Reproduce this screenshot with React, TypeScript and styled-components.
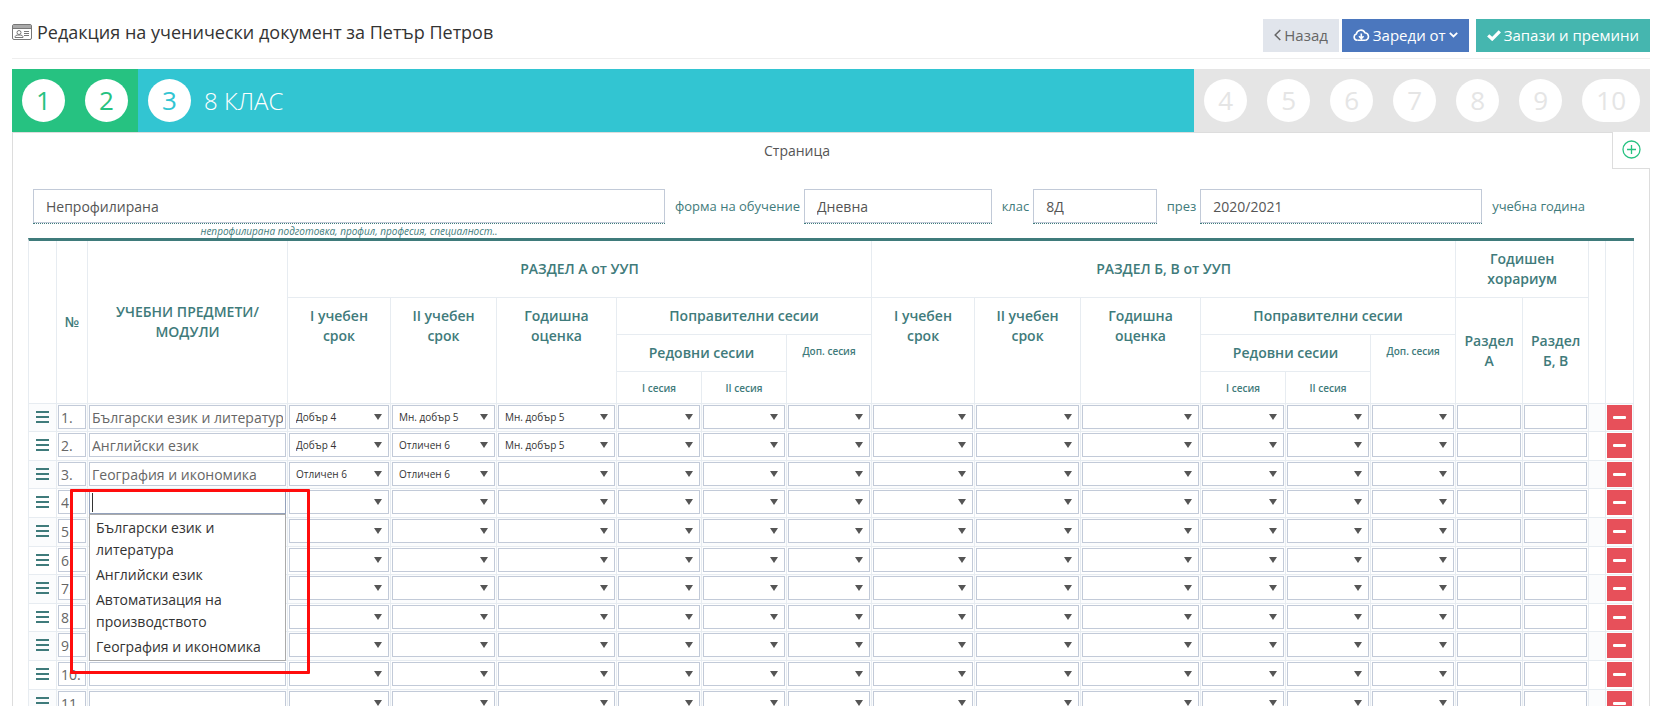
import React, { useId } from "react";
import styled, { createGlobalStyle, css } from "styled-components";

const teal = "#3f7b7b";
const line = "#e7ecf1";
const inputLine = "#c2cad8";

const GlobalStyle = createGlobalStyle`
  *, *::before, *::after { box-sizing: border-box; }
  html { scrollbar-width: none; }
  body {
    margin: 0;
    background: #fff;
    color: #333;
    font-family: "Open Sans", "Noto Sans", sans-serif;
    font-size: 14px;
  }
  button, input, select { font: inherit; color: inherit; }
`;

const Page = styled.main`
  padding: 18px 4px 0 12px;
`;

const Header = styled.header`
  display: flex;
  align-items: flex-start;
  justify-content: space-between;
  height: 41px;
  border-bottom: 1px solid #eee;
  margin-bottom: 10px;
`;

const Title = styled.h1`
  display: flex;
  align-items: center;
  gap: 5px;
  margin: 0;
  font-size: 18px;
  line-height: 28px;
  font-weight: 400;
`;

const Actions = styled.div`
  display: flex;
  padding-top: 1px;
`;

const Button = styled.button<{ $bg: string; $fg?: string; $gap?: number }>`
  display: inline-flex;
  align-items: center;
  gap: 3px;
  height: 33px;
  padding: 0 11px 1px;
  margin-left: ${(p) => p.$gap ?? 0}px;
  border: 0;
  background: ${(p) => p.$bg};
  color: ${(p) => p.$fg ?? "#fff"};
  font-size: 15px;
  line-height: 20px;
`;

const Steps = styled.ol`
  display: flex;
  margin: 0;
  padding: 0;
  list-style: none;
  height: 63px;
`;

type StepState = "done" | "active" | "todo";
const stepColor: Record<StepState, string> = { done: "#26c281", active: "#32c5d2", todo: "#e5e5e5" };

const Step = styled.li<{ $state: StepState }>`
  display: flex;
  align-items: center;
  gap: 13px;
  padding: 0 10px;
  background: ${(p) => stepColor[p.$state]};
  color: #fff;
  font-size: 24px;
  font-weight: 300;
  ${(p) => p.$state === "active" && css`flex: 1;`}
`;

const StepNumber = styled.span<{ $state: StepState }>`
  min-width: 43px;
  height: 43px;
  padding: 0 14px;
  border-radius: 40px;
  background: #fff;
  color: ${(p) => stepColor[p.$state]};
  font-size: 26px;
  font-weight: 400;
  line-height: 42px;
  text-align: center;
`;

const Panel = styled.section`
  border: solid #ddd;
  border-width: 0 1px;
`;

const TabBar = styled.div`
  display: flex;
  height: 37px;
  margin-right: -1px;
`;

const TabName = styled.div`
  flex: 1;
  padding-right: 31px;
  border-top: 1px solid #ddd;
  color: #555;
  font-size: 14px;
  line-height: 36px;
  text-align: center;
`;

const AddTab = styled.button`
  display: grid;
  place-items: center;
  width: 38px;
  padding: 0 0 2px;
  border: solid #ddd;
  border-width: 0 0 1px 1px;
  background: #fff;
  color: #26c281;
`;

const Fields = styled.div`
  display: grid;
  grid-template-columns: 630fr auto 187fr auto 123fr auto 281fr auto;
  align-items: start;
  padding: 20px 64px 0 20px;
  color: ${teal};
`;

const FieldLabel = styled.label<{ $last?: boolean }>`
  padding: 0 ${(p) => (p.$last ? 0 : 4)}px 0 10px;
  font-size: 13px;
  line-height: 35px;
  white-space: nowrap;
`;

const FieldBox = styled.div`
  border-bottom: 1px dotted ${teal};
`;

const Field = styled.input`
  display: block;
  width: 100%;
  height: 34px;
  padding: 0 12px;
  border: 1px solid ${inputLine};
  background: #fff;
  color: #555;
  font-size: 14px;
`;

const Hint = styled.p`
  grid-column: 1;
  margin: 0;
  font-size: 10px;
  font-style: italic;
  line-height: 14px;
  text-align: center;
  color: ${teal};
`;

const TableWrap = styled.div`
  padding: 0 15px;
`;

const Grades = styled.table`
  width: 100%;
  table-layout: fixed;
  border-collapse: separate;
  border-spacing: 0;
  border-top: 3px solid ${teal};
  border-left: 1px solid ${line};
`;

const Th = styled.th<{ $small?: boolean; $top?: boolean }>`
  padding: ${(p) => (p.$top ? "8px" : 0)} 4px 0;
  border-right: 1px solid ${line};
  border-bottom: 1px solid ${line};
  color: ${teal};
  font-size: ${(p) => (p.$small ? 10 : 14)}px;
  line-height: ${(p) => (p.$small ? 16 : 20)}px;
  font-weight: 600;
  vertical-align: ${(p) => (p.$top ? "top" : "middle")};
`;

const HeadRow = styled.tr<{ $h: number }>`
  height: ${(p) => p.$h}px;
`;

const BodyRow = styled.tr`
  height: 29px;
  &:nth-child(5n + 1), &:nth-child(5n + 3) { height: 28px; }
  &:nth-child(odd) { background: #fbfcfd; }
`;

const Td = styled.td`
  position: relative;
  padding: 1px;
  border-right: 1px solid ${line};
  border-bottom: 1px solid ${line};
  vertical-align: top;
`;

const CellInput = styled.input`
  display: block;
  width: 100%;
  height: 24px;
  padding: 0 2px;
  border: 1px solid ${inputLine};
  border-radius: 0;
  background: #fff;
  color: #666;
  font-size: 14px;
  outline: 0;
  caret-color: transparent;
  &:focus { border-color: #93a1bb; }
`;

const SelectBox = styled.div`
  display: grid;
  grid-template: 24px / 100%;
  align-items: center;
  &::after {
    content: "";
    grid-area: 1 / 1;
    justify-self: end;
    margin-right: 7px;
    border: solid transparent;
    border-width: 6px 4px 0;
    border-top-color: #555;
    pointer-events: none;
  }
`;

const Select = styled.select`
  grid-area: 1 / 1;
  appearance: none;
  width: 100%;
  height: 24px;
  padding: 0 6px;
  border: 1px solid ${inputLine};
  border-radius: 0;
  background: #fff;
  color: #333;
  font-size: 10px;
`;

const Grip = styled.button`
  display: grid;
  place-items: center;
  width: 100%;
  height: 24px;
  padding: 0;
  border: 0;
  background: none;
  color: ${teal};
`;

const Remove = styled.button`
  display: grid;
  place-items: center;
  width: 100%;
  height: 25px;
  padding: 0;
  border: 0;
  background: #e7505a;
  color: #fff;
`;

const Caret = styled.span`
  position: absolute;
  top: 4px;
  left: 4px;
  width: 1px;
  height: 19px;
  background: #333;
`;

const Suggestions = styled.ul`
  position: absolute;
  z-index: 2;
  top: 25px;
  left: 1px;
  right: 1px;
  margin: 0;
  padding: 1px 0 0;
  list-style: none;
  border: 1px solid #aaa;
  background: #fff;
  color: #333;
  font-size: 14px;
  line-height: 22px;
`;

const Suggestion = styled.li`
  padding: 1px 6px 2px;
`;

const Highlight = styled.div`
  position: absolute;
  z-index: 3;
  top: 0;
  left: -18px;
  right: -23px;
  height: 185px;
  border: 3px solid #ff0d0d;
  border-radius: 1px;
  pointer-events: none;
`;

const IdCard = () => (
  <svg width="20" height="16" viewBox="0 0 20 16" fill="none" stroke="#777" aria-hidden="true">
    <rect x="0.5" y="0.5" width="19" height="15" rx="1.5" />
    <path d="M1 1h18v3H1z" fill="#aaa" stroke="none" />
    <path d="M1 4.500h18M12 7.500h5M12 9.500h5M12 11.500h5M3 13.500c0-2 1-2.500 4-2.500s4 .5 4 2.500z" />
    <circle cx="7" cy="8.500" r="2" />
  </svg>
);
const AngleLeft = () => (
  <svg width="7" height="12" viewBox="0 0 7 12" fill="none" stroke="currentColor" strokeWidth="1.500" aria-hidden="true">
    <path d="M6.300 1 1.200 6l5.100 5" />
  </svg>
);
const AngleDown = () => (
  <svg width="9" height="6" viewBox="0 0 9 6" fill="none" stroke="currentColor" strokeWidth="1.800" aria-hidden="true">
    <path d="M.8.800 4.500 4.500 8.200.800" />
  </svg>
);
const CloudDown = () => (
  <svg width="17" height="13" viewBox="0 0 17 13" fill="none" stroke="currentColor" strokeWidth="1.600" aria-hidden="true">
    <path d="M4.500 11.200H4A3.200 3.200 0 0 1 3.300 5 4.600 4.600 0 0 1 12 3.800a3.800 3.800 0 0 1 .8 7.400h-.5" />
    <path d="M4.500 11.200h8M8.300 4.500v5M6 7.300l2.300 2.300 2.300-2.300" />
  </svg>
);
const Check = () => (
  <svg width="14" height="11" viewBox="0 0 14 11" fill="none" stroke="currentColor" strokeWidth="3.200" aria-hidden="true">
    <path d="M1.200 5.300 5.200 9 12.800 1.300" />
  </svg>
);
const CirclePlus = () => (
  <svg width="19" height="19" viewBox="0 0 19 19" fill="none" stroke="currentColor" strokeWidth="1.300" aria-hidden="true">
    <circle cx="9.500" cy="9.500" r="8.500" />
    <path d="M9.500 5v9M5 9.500h9" />
  </svg>
);
const Bars = () => (
  <svg width="13" height="12" viewBox="0 0 13 12" fill="currentColor" aria-hidden="true">
    <path d="M0 0h13v2H0zM0 5h13v2H0zM0 10h13v2H0z" />
  </svg>
);
const Minus = () => (
  <svg width="13" height="3" viewBox="0 0 13 3" fill="currentColor" aria-hidden="true">
    <rect width="13" height="3" rx="1" />
  </svg>
);

const columns = [28, 31, 200, 103, 106, 120, 85, 85, 85, 103, 106, 120, 85, 85, 85, 67, 66, 17, 28];
const gradeOptions = ["", "Добър 4", "Мн. добър 5", "Отличен 6"];
const gradeNames = ["I учебен срок", "II учебен срок", "Годишна оценка", "I сесия", "II сесия", "Доп. сесия"];
const gradeColumns = ["А", "Б, В"].flatMap((s) => gradeNames.map((n) => `Раздел ${s}, ${n}`));
const subjects = [
  { name: "Български език и литература", grades: ["Добър 4", "Мн. добър 5", "Мн. добър 5"] },
  { name: "Английски език", grades: ["Добър 4", "Отличен 6", "Мн. добър 5"] },
  { name: "География и икономика", grades: ["Отличен 6", "Отличен 6"] },
];
const rows = Array.from({ length: 11 }, (_, i) => subjects[i] ?? { name: "", grades: [] });
const suggestions = ["Български език и литература", "Английски език", "Автоматизация на производството", "География и икономика"];
const openRow = 3;

const steps: { n: number; state: StepState; label?: string }[] = [
  { n: 1, state: "done" },
  { n: 2, state: "done" },
  { n: 3, state: "active", label: "8 КЛАС" },
  ...[4, 5, 6, 7, 8, 9, 10].map((n) => ({ n, state: "todo" as StepState })),
];

const LabeledField = ({ label, value }: { label: string; value: string }) => {
  const id = useId();
  return (
    <>
      <FieldLabel htmlFor={id}>{label}</FieldLabel>
      <FieldBox><Field id={id} defaultValue={value} /></FieldBox>
    </>
  );
};

const SectionHead = () => (
  <>
    <Th $top rowSpan={3}>I учебен<br />срок</Th>
    <Th $top rowSpan={3}>II учебен<br />срок</Th>
    <Th $top rowSpan={3}>Годишна<br />оценка</Th>
    <Th colSpan={3}>Поправителни сесии</Th>
  </>
);

const SubjectRow = ({ index }: { index: number }) => {
  const row = rows[index];
  const open = index === openRow;
  return (
    <BodyRow>
      <Td><Grip aria-label="Премести реда"><Bars /></Grip></Td>
      <Td><CellInput aria-label="Номер" defaultValue={`${index + 1}.`} /></Td>
      <Td>
        <CellInput aria-label="Учебен предмет" defaultValue={row.name} autoFocus={open} />
        {open && (
          <>
            <Caret />
            <Suggestions>
              {suggestions.map((s) => <Suggestion key={s}>{s}</Suggestion>)}
            </Suggestions>
            <Highlight />
          </>
        )}
      </Td>
      {gradeColumns.map((name, i) => (
        <Td key={name}>
          <SelectBox>
            <Select aria-label={name} defaultValue={row.grades[i] ?? ""}>
              {gradeOptions.map((g) => <option key={g}>{g}</option>)}
            </Select>
          </SelectBox>
        </Td>
      ))}
      <Td><CellInput aria-label="Хорариум, раздел А" /></Td>
      <Td><CellInput aria-label="Хорариум, раздел Б, В" /></Td>
      <Td />
      <Td><Remove aria-label="Изтрий реда"><Minus /></Remove></Td>
    </BodyRow>
  );
};

export default function App() {
  return (
    <Page>
      <GlobalStyle />
      <Header>
        <Title><IdCard />Редакция на ученически документ за Петър Петров</Title>
        <Actions>
          <Button $bg="#e1e5ec" $fg="#666"><AngleLeft />Назад</Button>
          <Button $bg="#4b77be" $gap={3}><CloudDown />Зареди от<AngleDown /></Button>
          <Button $bg="#45b6af" $gap={7}><Check />Запази и премини</Button>
        </Actions>
      </Header>
      <Steps>
        {steps.map((s) => (
          <Step key={s.n} $state={s.state}>
            <StepNumber $state={s.state}>{s.n}</StepNumber>
            {s.label}
          </Step>
        ))}
      </Steps>
      <Panel>
        <TabBar>
          <TabName>Страница</TabName>
          <AddTab aria-label="Добави страница"><CirclePlus /></AddTab>
        </TabBar>
        <Fields>
          <FieldBox><Field id="profile" aria-describedby="profile-hint" aria-label="Профил" defaultValue="Непрофилирана" /></FieldBox>
          <LabeledField label="форма на обучение" value="Дневна" />
          <LabeledField label="клас" value="8Д" />
          <LabeledField label="през" value="2020/2021" />
          <FieldLabel as="span" $last>учебна година</FieldLabel>
          <Hint id="profile-hint">непрофилирана подготовка, профил, професия, специалност..</Hint>
        </Fields>
        <TableWrap>
          <Grades>
            <colgroup>{columns.map((w, i) => <col key={i} width={w} />)}</colgroup>
            <thead>
              <HeadRow $h={57}>
                <Th rowSpan={4} />
                <Th rowSpan={4}>№</Th>
                <Th rowSpan={4}>УЧЕБНИ ПРЕДМЕТИ/<br />МОДУЛИ</Th>
                <Th colSpan={6}>РАЗДЕЛ А от УУП</Th>
                <Th colSpan={6}>РАЗДЕЛ Б, В от УУП</Th>
                <Th colSpan={2}>Годишен<br />хорариум</Th>
                <Th rowSpan={4} />
                <Th rowSpan={4} />
              </HeadRow>
              <HeadRow $h={37}>
                <SectionHead />
                <SectionHead />
                <Th rowSpan={3}>Раздел<br />А</Th>
                <Th rowSpan={3}>Раздел<br />Б, В</Th>
              </HeadRow>
              <HeadRow $h={37}>
                <Th colSpan={2}>Редовни сесии</Th>
                <Th $small $top rowSpan={2}>Доп. сесия</Th>
                <Th colSpan={2}>Редовни сесии</Th>
                <Th $small $top rowSpan={2}>Доп. сесия</Th>
              </HeadRow>
              <HeadRow $h={32}>
                <Th $small>I сесия</Th>
                <Th $small>II сесия</Th>
                <Th $small>I сесия</Th>
                <Th $small>II сесия</Th>
              </HeadRow>
            </thead>
            <tbody>
              {rows.map((_, i) => <SubjectRow key={i} index={i} />)}
            </tbody>
          </Grades>
        </TableWrap>
      </Panel>
    </Page>
  );
}
